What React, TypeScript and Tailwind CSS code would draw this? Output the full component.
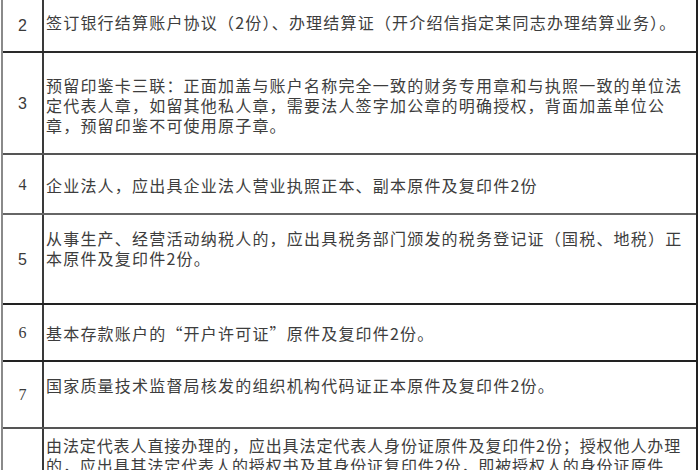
import React from "react";

type Row = {
  no: string;
  lines: string[];
  h: string;
  pt: string;
  numFont: string;
  border: string;
  track: string;
};

const rows: Row[] = [
  {
    no: "2",
    lines: ["签订银行结算账户协议（2份）、办理结算证（开介绍信指定某同志办理结算业务）。"],
    h: "h-[53px]",
    pt: "pt-[12px]",
    numFont: "font-['Liberation_Sans',sans-serif]",
    border: "border-[#2a2a2a]",
    track: "tracking-[1.2px]",
  },
  {
    no: "3",
    lines: [
      "预留印鉴卡三联：正面加盖与账户名称完全一致的财务专用章和与执照一致的单位法",
      "定代表人章，如留其他私人章，需要法人签字加公章的明确授权，背面加盖单位公",
      "章，预留印鉴不可使用原子章。",
    ],
    h: "h-[102px]",
    pt: "pt-[22px]",
    numFont: "font-['Liberation_Sans',sans-serif]",
    border: "border-[#555]",
    track: "tracking-[1.2px]",
  },
  {
    no: "4",
    lines: ["企业法人，应出具企业法人营业执照正本、副本原件及复印件2份"],
    h: "h-[60px]",
    pt: "pt-[20px]",
    numFont: "font-['Liberation_Serif',serif]",
    border: "border-[#666]",
    track: "tracking-[1.2px]",
  },
  {
    no: "5",
    lines: [
      "从事生产、经营活动纳税人的，应出具税务部门颁发的税务登记证（国税、地税）正",
      "本原件及复印件2份。",
    ],
    h: "h-[90px]",
    pt: "pt-[13px]",
    numFont: "font-['Liberation_Sans',sans-serif]",
    border: "border-[#222]",
    track: "tracking-[1.2px]",
  },
  {
    no: "6",
    lines: ["基本存款账户的“开户许可证”原件及复印件2份。"],
    h: "h-[57px]",
    pt: "pt-[18px]",
    numFont: "font-['Liberation_Serif',serif]",
    border: "border-[#222]",
    track: "tracking-[1.2px]",
  },
  {
    no: "7",
    lines: ["国家质量技术监督局核发的组织机构代码证正本原件及复印件2份。"],
    h: "h-[67px]",
    pt: "pt-[13px]",
    numFont: "font-['Liberation_Serif',serif]",
    border: "border-[#555]",
    track: "tracking-[1.2px]",
  },
  {
    no: "",
    lines: [
      "由法定代表人直接办理的，应出具法定代表人身份证原件及复印件2份；授权他人办理",
      "的，应出具其法定代表人的授权书及其身份证复印件2份，即被授权人的身份证原件",
    ],
    h: "h-[60px]",
    pt: "pt-[6px]",
    numFont: "font-['Liberation_Sans',sans-serif]",
    border: "border-transparent",
    track: "tracking-[0.9px]",
  },
];

export default function App() {
  return (
    <div className="h-[470px] w-[700px] overflow-hidden bg-white">
      <div className="ml-[1px] w-[697px] border-x-2 border-l-[#8a8a8a] border-r-[#222]">
        {rows.map((r, i) => (
          <div key={i} className={`flex border-b-2 ${r.h} ${r.border}`}>
            <div
              className={`flex w-[41px] shrink-0 items-center justify-center border-r-2 border-[#3a3a3a] pt-[1px] text-[16px] text-[#3a3a3a] ${r.numFont}`}
            >
              {r.no}
            </div>
            <div
              className={`flex-1 pl-[2px] ${r.pt} ${r.track} font-['Noto_Sans_CJK_SC','Liberation_Serif',sans-serif] text-[16px] leading-[20px] whitespace-nowrap text-[#3d3d3d]`}
            >
              {r.lines.map((l, j) => (
                <div key={j}>{l}</div>
              ))}
            </div>
          </div>
        ))}
      </div>
    </div>
  );
}
